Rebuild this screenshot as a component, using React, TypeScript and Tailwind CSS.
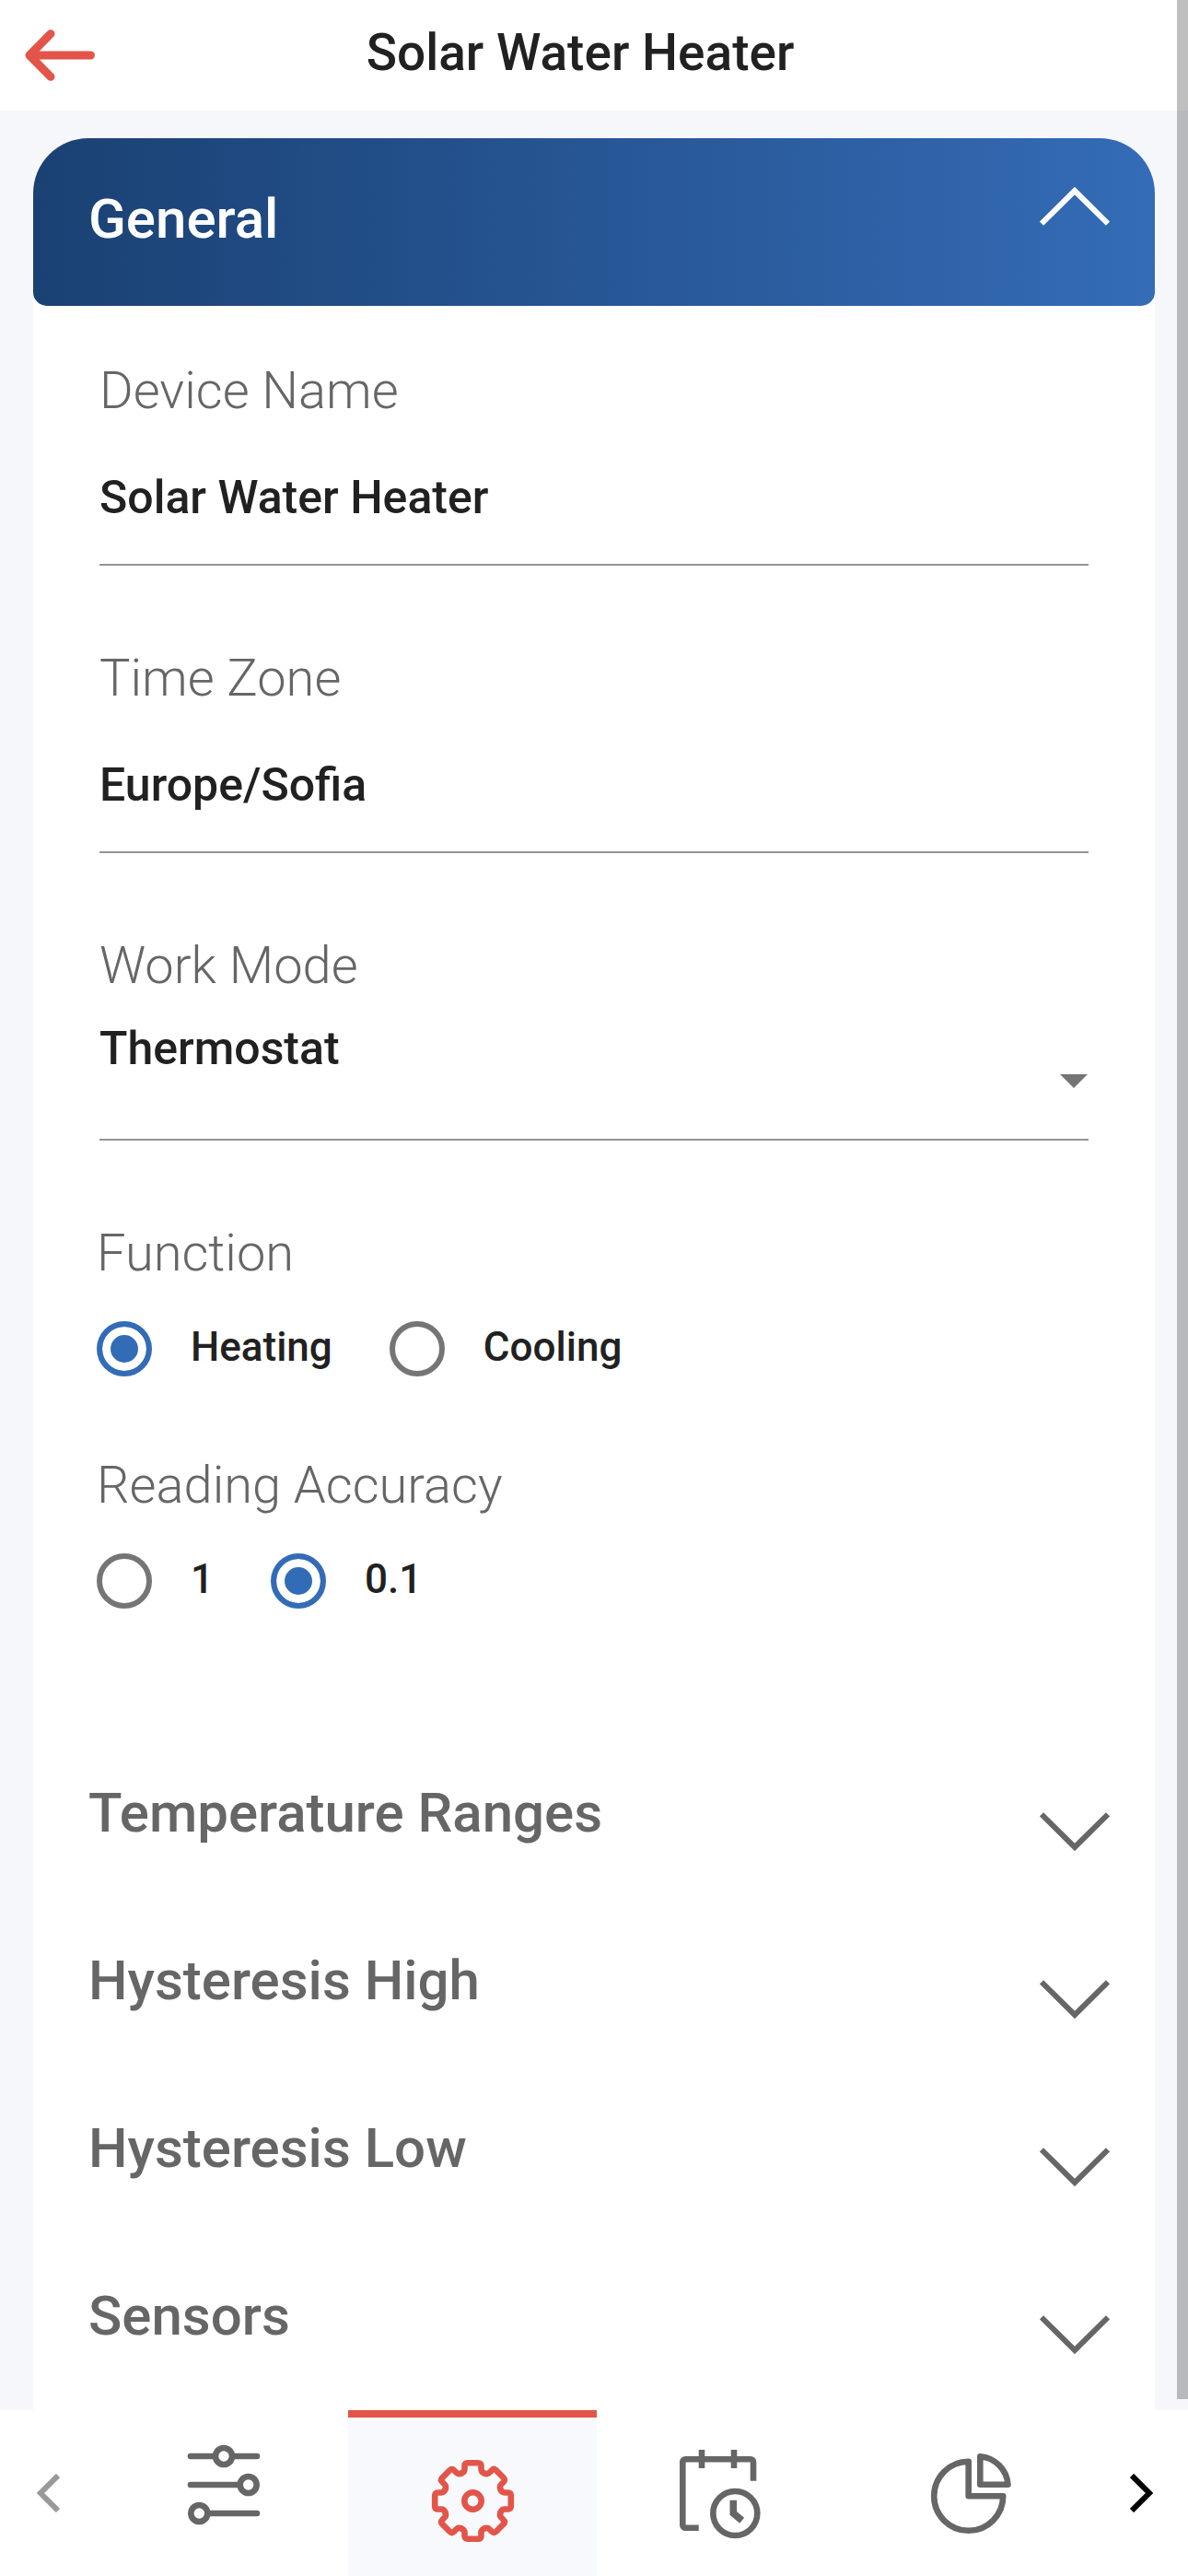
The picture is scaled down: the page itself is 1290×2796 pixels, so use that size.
import { useState } from "react";
import type { ReactNode } from "react";
import clsx from "clsx";

const Chevron = ({ open }: { open: boolean }) => (
  <svg
    viewBox="0 0 76 42"
    className={clsx("h-[42px] w-[76px] shrink-0 self-start", open ? "mt-[53px]" : "mt-[87px] rotate-180")}
    fill="none"
    stroke="currentColor"
    strokeWidth="6"
    aria-hidden="true"
  >
    <path d="M2 39.7 38 4l36 35.7" />
  </svg>
);

const TabIcon = ({ children }: { children: ReactNode }) => (
  <svg
    viewBox="0 0 120 120"
    className="size-[120px]"
    fill="none"
    stroke="currentColor"
    strokeWidth="6.6"
    aria-hidden="true"
  >
    {children}
  </svg>
);

const SlidersIcon = () => (
  <TabIcon>
    <g strokeLinecap="round">
      <path d="M24 16h26M70 16h26M24 47h53M43 78h53" />
      <circle cx="60" cy="16" r="9" />
      <circle cx="86.7" cy="47" r="9" />
      <circle cx="33.3" cy="78" r="9" />
    </g>
  </TabIcon>
);

const toothAngles = [0, 45, 90, 135, 180, 225, 270, 315];

const GearIcon = () => (
  <TabIcon>
    <g transform="translate(60.5 64.5)" strokeLinecap="round">
      {toothAngles.map((angle) => (
        <path
          key={angle}
          transform={`rotate(${angle})`}
          d="M-12.4-30Q-9-31.4-9-34.5V-38Q-9-41.3-5.7-41.3H5.7Q9-41.3 9-38V-34.5Q9-31.4 12.4-30"
        />
      ))}
      <circle r="9.2" />
    </g>
  </TabIcon>
);

const ScheduleIcon = () => (
  <TabIcon>
    <path d="M35.7 93.7H21.3a3 3 0 0 1-3-3V22.3a3 3 0 0 1 3-3H92a3 3 0 0 1 3 3v20.4" />
    <path d="M39 9v20M74 9v20" />
    <circle cx="75.3" cy="78" r="24" />
    <path d="M73.3 63.7V78l9.4 7.7" strokeWidth="7.6" />
  </TabIcon>
);

const PieIcon = () => (
  <TabIcon>
    <g strokeLinejoin="round">
      <path d="M58.7 21.8v37.5h37.5A37.5 37.5 0 1 1 58.7 21.8z" />
      <path d="M71.3 16.3v30.4h30.2A33 33 0 0 0 71.3 16.3z" />
    </g>
  </TabIcon>
);

const tabs = [
  { id: "controls", label: "Controls", icon: <SlidersIcon /> },
  { id: "settings", label: "Settings", icon: <GearIcon /> },
  { id: "schedule", label: "Schedule", icon: <ScheduleIcon /> },
  { id: "statistics", label: "Statistics", icon: <PieIcon /> },
];

const sections = ["Temperature Ranges", "Hysteresis High", "Hysteresis Low", "Sensors"];

const labelClass = "block text-[56px] leading-[72px] font-light text-[#666666]";
const controlClass =
  "block h-[154px] w-full appearance-none border-b-2 border-[#949494] bg-transparent text-[50px] font-medium text-[#212121] outline-none";

const TextField = ({ id, label, defaultValue }: { id: string; label: string; defaultValue: string }) => (
  <div className="px-[3px]">
    <label htmlFor={id} className={labelClass}>
      {label}
    </label>
    <input id={id} type="text" defaultValue={defaultValue} className={clsx(controlClass, "pt-2")} />
  </div>
);

type RadioGroupProps = {
  name: string;
  legend: string;
  options: string[];
  initial: string;
};

const RadioGroup = ({ name, legend, options, initial }: RadioGroupProps) => {
  const [value, setValue] = useState(initial);

  return (
    <fieldset>
      <legend className={labelClass}>{legend}</legend>
      <div className="mt-[38px] flex gap-[62px]">
        {options.map((option) => (
          <label key={option} className="flex items-center gap-[42px] text-[44px] leading-[56px] font-medium text-[#212121]">
            <input
              type="radio"
              name={name}
              value={option}
              checked={value === option}
              onChange={() => setValue(option)}
              className="size-[60px] shrink-0 appearance-none rounded-full border-6 border-[#757575] checked:border-[#336cb6] checked:bg-[#336cb6] checked:shadow-[inset_0_0_0_9px_#ffffff]"
            />
            <span className="pb-1">{option}</span>
          </label>
        ))}
      </div>
    </fieldset>
  );
};

export default function App() {
  const [activeTab, setActiveTab] = useState("settings");

  return (
    <div className="relative flex min-h-screen flex-col bg-[#f5f7fb] font-[Roboto,sans-serif]">
      <header className="flex h-[120px] items-center bg-white pr-[133px] pb-[6px] pl-[27px]">
        <button type="button" aria-label="Back" className="pt-[6px] text-[#e35549]">
          <svg
            viewBox="0 0 76 56"
            className="h-[56px] w-[76px]"
            fill="none"
            stroke="currentColor"
            strokeWidth="9"
            strokeLinecap="round"
            strokeLinejoin="round"
            aria-hidden="true"
          >
            <path d="M5 28h66.5M28 4.7 5 28l23 23.3" />
          </svg>
        </button>
        <h1 className="flex-1 text-center text-[55px] leading-[72px] font-medium text-[#212121]">
          Solar Water Heater
        </h1>
      </header>

      <main className="flex flex-1 flex-col px-[36px] pt-[30px]">
        <div className="flex-1 rounded-t-[60px] bg-white pb-2">
          <h2>
            <button
              type="button"
              aria-expanded="true"
              className="flex h-[182px] w-full items-center justify-between rounded-t-[60px] rounded-b-[15px] bg-linear-to-r from-[#1a4173] to-[#346cb7] pr-[49px] pl-[60px] text-white"
            >
              <span className="pb-[6px] text-[60px] leading-[80px] font-medium">General</span>
              <Chevron open />
            </button>
          </h2>

          <div className="flex flex-col px-[69px] pt-[56px] pb-[134px]">
            <div className="flex flex-col gap-[86px]">
              <TextField id="device-name" label="Device Name" defaultValue="Solar Water Heater" />
              <TextField id="time-zone" label="Time Zone" defaultValue="Europe/Sofia" />
              <div className="px-[3px]">
                <label htmlFor="work-mode" className={labelClass}>
                  Work Mode
                </label>
                <div className="relative">
                  <select id="work-mode" defaultValue="Thermostat" className={clsx(controlClass, "pb-[44px]")}>
                    <option>Thermostat</option>
                  </select>
                  <svg
                    viewBox="0 0 30 15"
                    className="pointer-events-none absolute top-[82px] right-px h-[15px] w-[30px] text-[#757575]"
                    fill="currentColor"
                    aria-hidden="true"
                  >
                    <path d="M0 0h30L15 15z" />
                  </svg>
                </div>
              </div>
              <RadioGroup name="function" legend="Function" options={["Heating", "Cooling"]} initial="Heating" />
            </div>
            <div className="mt-[82px]">
              <RadioGroup name="accuracy" legend="Reading Accuracy" options={["1", "0.1"]} initial="0.1" />
            </div>
          </div>

          {sections.map((section) => (
            <h2 key={section}>
              <button
                type="button"
                aria-expanded="false"
                className="flex h-[182px] w-full items-center justify-between pr-[49px] pl-[60px] text-[#666666]"
              >
                <span className="pb-[6px] text-[60px] leading-[80px] font-medium">{section}</span>
                <Chevron open={false} />
              </button>
            </h2>
          ))}
        </div>
      </main>

      <nav className="flex h-[180px] bg-white">
        <button type="button" aria-label="Previous tabs" className="flex w-[108px] items-center justify-center pr-1 text-[#999999]">
          <svg viewBox="0 0 25 42" className="h-[42px] w-[25px]" fill="none" stroke="currentColor" strokeWidth="6" aria-hidden="true">
            <path d="M23 2 4 21l19 19" />
          </svg>
        </button>
        {tabs.map((tab) => (
          <button
            key={tab.id}
            type="button"
            aria-label={tab.label}
            aria-current={activeTab === tab.id ? "page" : undefined}
            onClick={() => setActiveTab(tab.id)}
            className={clsx(
              "flex flex-1 items-center justify-center border-t-8",
              activeTab === tab.id
                ? "border-[#e35549] bg-[#f7f9fd] text-[#e35549]"
                : "border-transparent text-[#666666]"
            )}
          >
            {tab.icon}
          </button>
        ))}
        <button type="button" aria-label="Next tabs" className="flex w-[102px] items-center justify-center text-black">
          <svg viewBox="0 0 25 42" className="h-[42px] w-[25px]" fill="none" stroke="currentColor" strokeWidth="6" aria-hidden="true">
            <path d="m2 2 19 19L2 40" />
          </svg>
        </button>
      </nav>

      {/* scroll thumb laid over the page edge */}
      <div className="pointer-events-none absolute top-0 right-0 bottom-[192px] w-[12px] bg-black/25" />
    </div>
  );
}
